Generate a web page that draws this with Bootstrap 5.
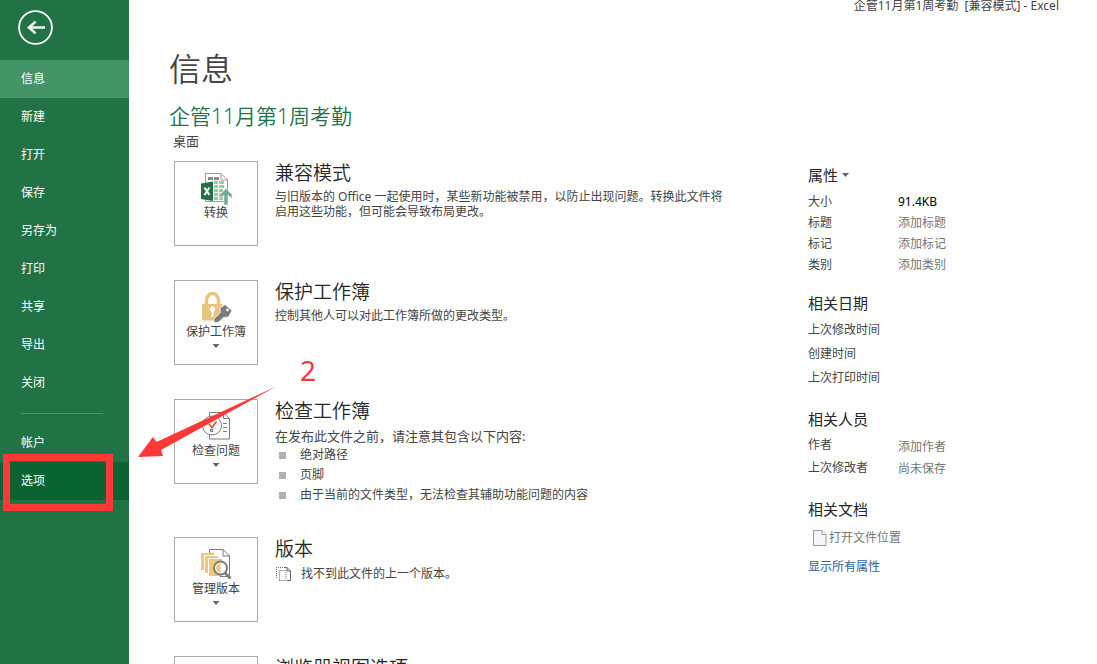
<!DOCTYPE html>
<html lang="zh-CN">
<head>
<meta charset="utf-8">
<meta name="viewport" content="width=device-width, initial-scale=1">
<title>企管11月第1周考勤 [兼容模式] - Excel</title>
<link href="https://cdn.jsdelivr.net/npm/bootstrap@5.3.0/dist/css/bootstrap.min.css" rel="stylesheet">
<style>
  body { font: 12px/16px "Noto Sans", "Noto Sans CJK SC", sans-serif; color: #444; background: #fff; }

  .backstage-nav { width: 129px; background: #217346; }
  .back-btn { width: 35px; height: 35px; margin: 10px 0 15px 18px; }
  .backstage-nav .nav-link { height: 38px; line-height: 38px; padding: 0 0 0 21px; color: #fff; border-radius: 0; }
  .backstage-nav .nav-link.active { background: #439467; }
  .backstage-nav .nav-link.pressed { background: #0a6332; }
  .nav-rule { height: 1px; margin: 11px 26px 10px 21px; background: #439467; }
  .callout-box { left: 3px; top: -8px; width: 110px; height: 57px; border: 7px solid #fd3836; pointer-events: none; }

  .backstage-main { padding-left: 40px; }
  .window-title { line-height: 12px; padding-right: 38px; }
  .page-title { font-size: 32px; line-height: 40px; margin: 37px 0 0; font-weight: 350; }
  .file-title { font-size: 21px; line-height: 28px; margin: 13px 0 0; color: #217346; font-weight: 350; }
  .file-place { font-size: 13px; line-height: 18px; margin: 2px 0 11px 4px; }

  .info-col { min-width: 0; padding-left: 5px; }
  .info-row { gap: 17px; min-height: 87px; margin-bottom: 32px; }
  .tile { width: 84px; height: 85px; padding: 11px 0 0; border: 1px solid #ababab; background: #fdfdfd; color: #444; }
  .tile svg.pic { width: 32px; height: 32px; }
  .caret { width: 7px; height: 4px; background: #666; clip-path: polygon(0 0, 100% 0, 50% 100%); }
  .info-row h2 { font-size: 19px; line-height: 24px; margin: 0 0 4px; color: #262626; font-weight: 350; }
  .info-row p { line-height: 15px; max-width: 456px; margin: 0; }
  .info-row p.intro { font-size: 13px; line-height: 18px; }
  .issues li { line-height: 20px; gap: 14px; padding-left: 4px; }
  .issues li::before { content: ""; width: 7px; height: 7px; background: #b1b1b1; }
  .no-versions { line-height: 18px; }

  .props-col { width: 289px; }
  .props-col h3 { font-size: 15px; line-height: 20px; margin: 0; color: #262626; font-weight: 400; }
  .prop-grid { display: grid; grid-template-columns: 90px 1fr; margin: 0; }
  .prop-grid input { width: 120px; padding: 0; border: 0; background: none; color: #444; font: inherit; }
  .prop-grid input::placeholder { color: #767676; opacity: 1; }
  .rows-21 { line-height: 21px; margin: 6px 0 18px; }
  .rows-24 { line-height: 24px; margin: 5px 0 19px; }
  .rows-23 { line-height: 23px; margin: 4px 0 20px; }
  .rows-23 > :nth-child(even) { padding-top: 3px; height: 23px; line-height: 20px; }
  .props-col a { text-decoration: none; }
  .open-place { margin-top: 10px; color: #767676; }
  .show-all { margin-top: 12px; color: #2a6496; }

  .arrow-note { left: 138px; top: 386px; width: 139px; height: 72px; pointer-events: none; }
  .step-note { left: 300px; top: 353px; font-size: 28px; line-height: 34px; color: #fd3836; }
</style>
</head>
<body>
<div class="d-flex vh-100 overflow-hidden position-relative">
  <nav class="backstage-nav flex-shrink-0" aria-label="文件">
    <button class="back-btn btn p-0 border-0 d-block" type="button" aria-label="返回">
      <svg class="d-block" width="35" height="35" viewBox="0 0 35 35" fill="none" stroke="#fff">
        <circle cx="17.5" cy="17.5" r="16.4" stroke-width="1.8"/>
        <path d="M10.500 17.500H27" stroke-width="2.400"/>
        <path d="M17.600 11.600L11 17.500l6.600 5.900" stroke-width="2.600"/>
      </svg>
    </button>
    <div class="nav flex-column flex-nowrap">
      <a class="nav-link active" href="#">信息</a>
      <a class="nav-link" href="#">新建</a>
      <a class="nav-link" href="#">打开</a>
      <a class="nav-link" href="#">保存</a>
      <a class="nav-link" href="#">另存为</a>
      <a class="nav-link" href="#">打印</a>
      <a class="nav-link" href="#">共享</a>
      <a class="nav-link" href="#">导出</a>
      <a class="nav-link" href="#">关闭</a>
      <div class="nav-rule"></div>
      <a class="nav-link" href="#">帐户</a>
      <div class="position-relative">
        <a class="nav-link pressed" href="#">选项</a>
        <div class="callout-box position-absolute"></div>
      </div>
    </div>
  </nav>

  <main class="backstage-main flex-grow-1">
    <div class="window-title text-end">企管11月第1周考勤&nbsp; [兼容模式] - Excel</div>
    <h1 class="page-title">信息</h1>
    <div class="file-title">企管11月第1周考勤</div>
    <div class="file-place">桌面</div>

    <div class="d-flex">
      <div class="info-col flex-grow-1">
        <section class="info-row d-flex align-items-start">
          <button class="tile d-flex flex-column align-items-center flex-shrink-0" type="button">
            <svg class="pic" viewBox="0 0 32 32">
              <path d="M5.500 .5h15.500l6.500 6.500v21.500h-22z" fill="#fff" stroke="#9a9a9a"/>
              <path d="M21 .5v6.500h6.500" fill="none" stroke="#9a9a9a"/>
              <path d="M8 4h5v3H8zM14 4h5v3h-5z" fill="#8a8a8a"/>
              <path d="M14 8h4v3h-4zM19 8h5v3h-5zM14 12h4v3h-4zM19 12h5v3h-5zM14 16h4v3h-4zM19 16h4v3h-4zM14 20h4v3h-4zM19 20h4v3h-4zM14 24h4v3h-4zM19 24h4v3h-4z" fill="#8fcfa8"/>
              <path d="M1 10.500L13 8.500v19.500L1 26z" fill="#217346"/>
              <path d="M4.500 14.500l5 7.500M9.500 14.500l-5 7.500" stroke="#fff" stroke-width="2"/>
              <path d="M26 15.500l6 6v4l-4-3.600V32h-4V21.900L20 25.500v-4z" fill="#72ab96" stroke="#fff" stroke-width=".5"/>
            </svg>
            <span>转换</span>
          </button>
          <div>
            <h2>兼容模式</h2>
            <p>与旧版本的 Office 一起使用时，某些新功能被禁用，以防止出现问题。转换此文件将启用这些功能，但可能会导致布局更改。</p>
          </div>
        </section>

        <section class="info-row d-flex align-items-start">
          <button class="tile d-flex flex-column align-items-center flex-shrink-0" type="button">
            <svg class="pic" viewBox="0 0 32 32">
              <path d="M6.500 14V8.500a6 7 0 0 1 12 0V14" fill="none" stroke="#eac282" stroke-width="3.400"/>
              <path d="M2 12h20.500v16.500H3.500L2 27z" fill="#eac282"/>
              <circle cx="12.500" cy="17" r="2.600" fill="#fff"/>
              <path d="M11.500 17h2v8h-2z" fill="#fff"/>
              <path d="M25 12.500l7 6-3.500 6.500-5 .5-5.500 5h-4v-3.500l6.500-6.500-.5-4z" fill="#7b7b7b" stroke="#fff" stroke-width=".7"/>
              <circle cx="27.500" cy="18" r="1.400" fill="#fff"/>
            </svg>
            <span>保护工作簿</span>
            <span class="caret mt-1"></span>
          </button>
          <div>
            <h2>保护工作簿</h2>
            <p>控制其他人可以对此工作簿所做的更改类型。</p>
          </div>
        </section>

        <section class="info-row d-flex align-items-start">
          <button class="tile d-flex flex-column align-items-center flex-shrink-0" type="button">
            <svg class="pic" viewBox="0 0 32 32" fill="none">
              <path d="M9.500 1.500h14l6 6v20.500h-20z" fill="#fff" stroke="#7b7b7b"/>
              <path d="M23.500 1.500v6h6M23 12.500h4M23 16.500h4M23 20.500h4" stroke="#7b7b7b"/>
              <circle cx="12" cy="14.500" r="9.500" fill="#fff" stroke="#7b7b7b"/>
              <path d="M9 13l3 3.500 4.500-6" stroke="#e0592f" stroke-width="1.800"/>
              <rect x="10.500" y="18.500" width="2" height="2" stroke="#7b7b7b"/>
            </svg>
            <span>检查问题</span>
            <span class="caret mt-1"></span>
          </button>
          <div>
            <h2>检查工作簿</h2>
            <p class="intro">在发布此文件之前，请注意其包含以下内容:</p>
            <ul class="issues list-unstyled m-0">
              <li class="d-flex align-items-center">绝对路径</li>
              <li class="d-flex align-items-center">页脚</li>
              <li class="d-flex align-items-center">由于当前的文件类型，无法检查其辅助功能问题的内容</li>
            </ul>
          </div>
        </section>

        <section class="info-row d-flex align-items-start">
          <button class="tile d-flex flex-column align-items-center flex-shrink-0" type="button">
            <svg class="pic" viewBox="0 0 32 32" fill="none">
              <path d="M9.500 5V.5H23l6.500 6.500v20.500H20" fill="#fff" stroke="#7b7b7b"/>
              <path d="M23 .5V7h6.500" stroke="#7b7b7b"/>
              <path d="M1 4h13v2H4v15H1zM5 7h13v2H8v15H5zM9 10h13v17H9z" fill="#f0c87d"/>
              <circle cx="20.500" cy="19" r="6.500" fill="#fff" stroke="#7b7b7b" stroke-width="2"/>
              <path d="M16 19a4.500 4.500 0 0 1 4.500-4.500v9A4.500 4.500 0 0 1 16 19z" fill="#f0c87d"/>
              <path d="M25 24l5.500 5.500" stroke="#7b7b7b" stroke-width="2.800"/>
            </svg>
            <span>管理版本</span>
            <span class="caret mt-1"></span>
          </button>
          <div>
            <h2>版本</h2>
            <div class="no-versions d-flex align-items-center gap-2">
              <svg width="18" height="16" viewBox="0 0 18 16" fill="none" stroke="#666">
                <path d="M1.500 12V1.500H11" stroke-dasharray="1 1"/>
                <path d="M4.500 14.500v-10H11v10z" stroke-dasharray="1 1"/>
                <path d="M9 1.500h3l3.500 3.500v9.500H12M12 1.500V5h3.500"/>
              </svg>
              <span>找不到此文件的上一个版本。</span>
            </div>
          </div>
        </section>

        <section class="info-row d-flex align-items-start">
          <button class="tile d-flex flex-column align-items-center flex-shrink-0" type="button" aria-label="浏览器视图选项"></button>
          <div>
            <h2>浏览器视图选项</h2>
          </div>
        </section>
      </div>

      <aside class="props-col flex-shrink-0 pt-1">
        <h3 class="d-flex align-items-center gap-1">属性 <span class="caret"></span></h3>
        <div class="prop-grid rows-21">
          <span>大小</span><span class="text-black">91.4KB</span>
          <label for="p-title">标题</label><input id="p-title" type="text" placeholder="添加标题">
          <label for="p-tag">标记</label><input id="p-tag" type="text" placeholder="添加标记">
          <label for="p-cat">类别</label><input id="p-cat" type="text" placeholder="添加类别">
        </div>
        <h3>相关日期</h3>
        <div class="prop-grid rows-24">
          <span>上次修改时间</span><span></span>
          <span>创建时间</span><span></span>
          <span>上次打印时间</span><span></span>
        </div>
        <h3>相关人员</h3>
        <div class="prop-grid rows-23">
          <label for="p-author">作者</label><input id="p-author" type="text" placeholder="添加作者">
          <span>上次修改者</span><span class="text-secondary">尚未保存</span>
        </div>
        <h3>相关文档</h3>
        <a class="open-place d-flex align-items-center ps-1" href="#">
          <svg width="17" height="18" viewBox="0 0 17 18"><path d="M1.500 1.500h8.500l4 4v11H1.500z" fill="#f6f6f6" stroke="#999"/><path d="M10 1.500v4h4" fill="#fff" stroke="#999"/></svg>
          打开文件位置
        </a>
        <a class="show-all d-inline-block" href="#">显示所有属性</a>
      </aside>
    </div>
  </main>

  <svg class="arrow-note position-absolute" viewBox="0 0 139 72"><path d="M0 71L15 51l3.500 5L138 .5 23 64l2 6z" fill="#fd3836"/></svg>
  <div class="step-note position-absolute">2</div>
</div>
<script src="https://cdn.jsdelivr.net/npm/bootstrap@5.3.0/dist/js/bootstrap.bundle.min.js"></script>
</body>
</html>
